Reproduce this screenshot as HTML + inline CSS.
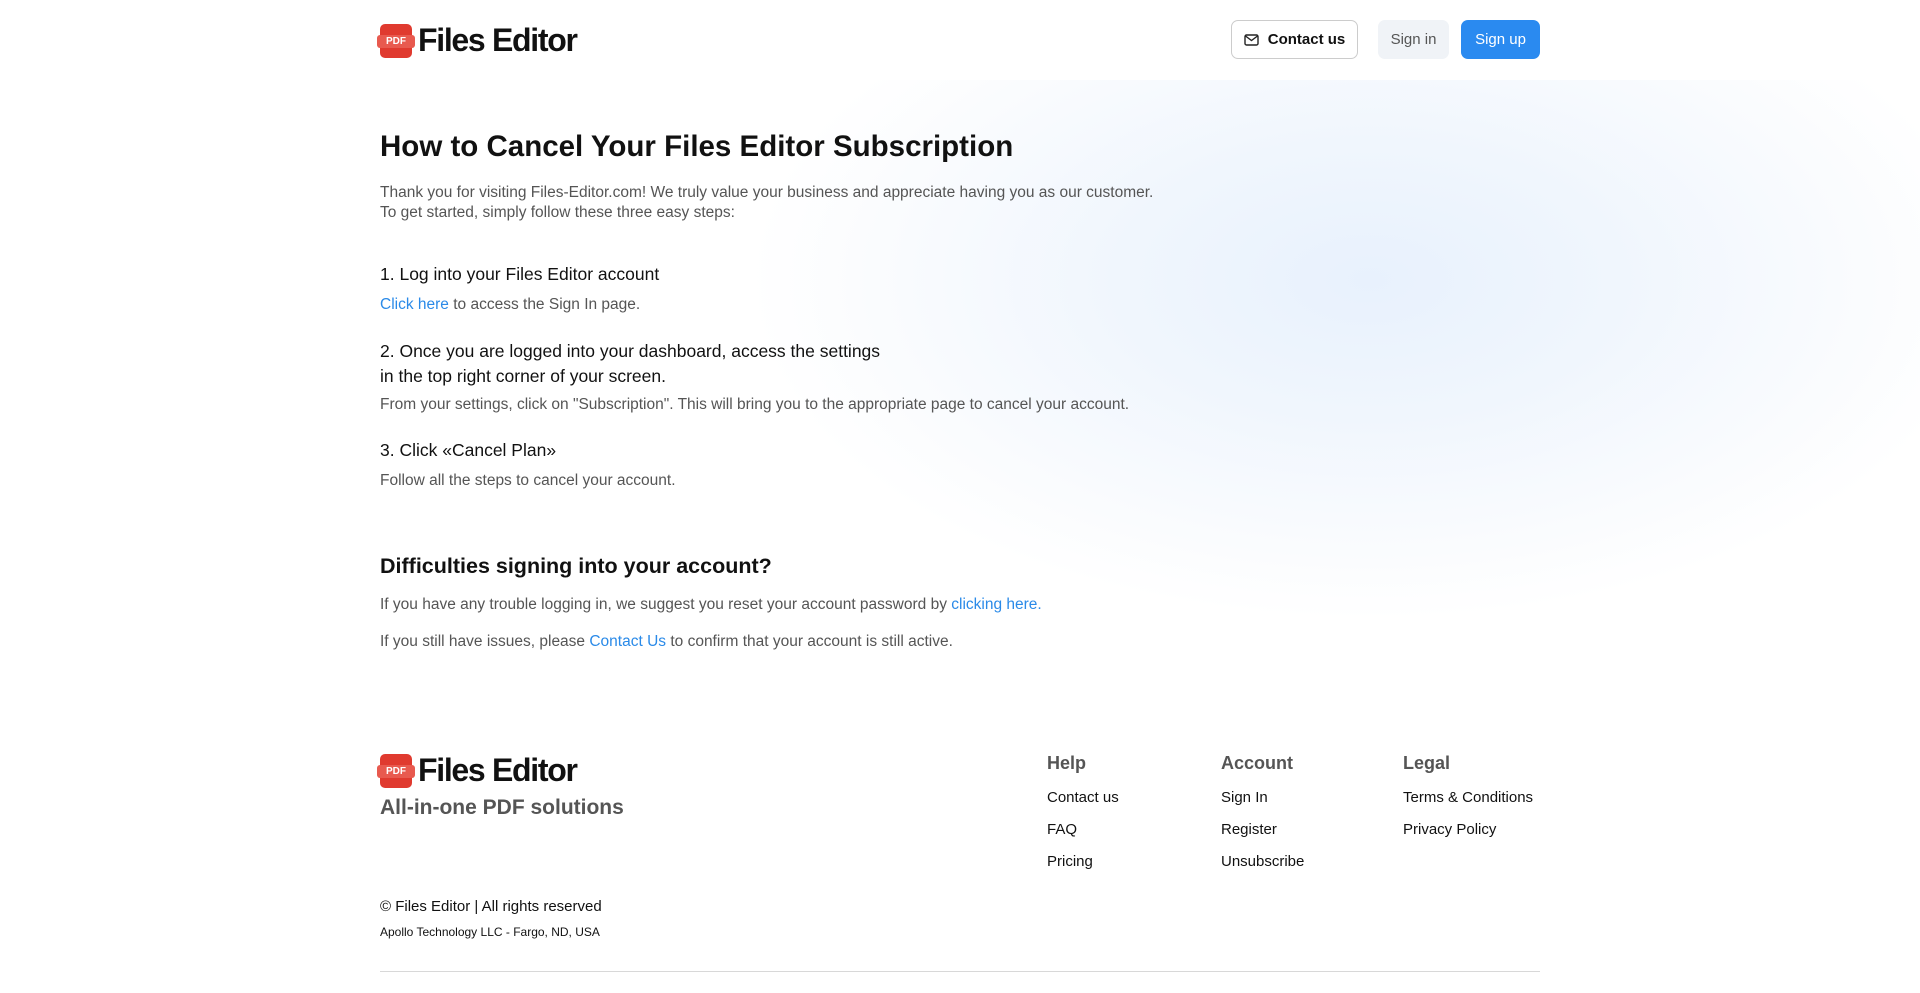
<!DOCTYPE html>
<html><head><meta charset="utf-8"><style>
*{margin:0;padding:0;box-sizing:border-box}
body{width:1920px;height:993px;overflow:hidden;background:#fff;font-family:"Liberation Sans",sans-serif;position:relative;color:#111}
.bg{position:absolute;left:650px;top:80px;width:1270px;height:600px;background:radial-gradient(ellipse 620px 340px at 720px 200px,#e8f1fd 0%,#f0f6fd 40%,#f9fbfe 75%,rgba(255,255,255,0) 100%)}
.a{position:absolute;white-space:nowrap}
.logo{display:flex;align-items:center;gap:6px}
.ic{width:32px;height:34px;background:#e03a2f;border-radius:5px;position:relative}
.ic span{position:absolute;left:-3px;top:11px;width:38px;height:13px;background:#e85a4f;border-radius:3px;color:#fff;font-size:10px;font-weight:bold;text-align:center;line-height:13px}
.lt{font-size:32px;font-weight:bold;letter-spacing:-1.3px;color:#111}
.btn{position:absolute;top:20px;height:39px;border-radius:7px;font-size:15px;display:flex;align-items:center;justify-content:center}
.t{color:#555;font-size:15.5px}
.l{color:#2a8ae8}
.h{font-size:17.5px;color:#111}
.fh{font-size:18px;font-weight:bold;color:#555}
.fl{font-size:15px;color:#111}
</style></head><body>
<div class="bg"></div>
<div class="a logo" style="left:380px;top:22px"><div class="ic"><span>PDF</span></div><div class="lt">Files Editor</div></div>
<div class="btn" style="left:1231px;width:127px;border:1px solid #ccc;color:#111;font-weight:bold"><svg width="15" height="12" viewBox="0 0 15 12" style="margin-right:9px"><rect x="1" y="1" width="13" height="10" rx="1.5" fill="none" stroke="#222" stroke-width="1.4"/><path d="M1.5 2 L7.5 6.5 L13.5 2" fill="none" stroke="#222" stroke-width="1.4"/></svg>Contact us</div>
<div class="btn" style="left:1378px;width:71px;background:#f0f3f7;color:#555">Sign in</div>
<div class="btn" style="left:1461px;width:79px;background:#2a8af0;color:#fff">Sign up</div>

<div class="a" style="left:380px;top:130px;font-size:29.5px;font-weight:bold;color:#111">How to Cancel Your Files Editor Subscription</div>
<div class="a t" style="left:380px;top:183px;line-height:20px">Thank you for visiting Files-Editor.com! We truly value your business and appreciate having you as our customer.<br>To get started, simply follow these three easy steps:</div>
<div class="a h" style="left:380px;top:264px">1. Log into your Files Editor account</div>
<div class="a t" style="left:380px;top:296px"><span class="l">Click here</span> to access the Sign In page.</div>
<div class="a h" style="left:380px;top:339px;line-height:25px">2. Once you are logged into your dashboard, access the settings<br>in the top right corner of your screen.</div>
<div class="a t" style="left:380px;top:396px">From your settings, click on "Subscription". This will bring you to the appropriate page to cancel your account.</div>
<div class="a h" style="left:380px;top:440px">3. Click «Cancel Plan»</div>
<div class="a t" style="left:380px;top:472px">Follow all the steps to cancel your account.</div>
<div class="a" style="left:380px;top:554px;font-size:21.5px;font-weight:bold;color:#111">Difficulties signing into your account?</div>
<div class="a t" style="left:380px;top:596px">If you have any trouble logging in, we suggest you reset your account password by <span class="l">clicking here.</span></div>
<div class="a t" style="left:380px;top:633px">If you still have issues, please <span class="l">Contact Us</span> to confirm that your account is still active.</div>

<div class="a logo" style="left:380px;top:752px"><div class="ic"><span>PDF</span></div><div class="lt">Files Editor</div></div>
<div class="a" style="left:380px;top:796px;font-size:21px;font-weight:bold;color:#555">All-in-one PDF solutions</div>

<div class="a fh" style="left:1047px;top:753px">Help</div>
<div class="a fl" style="left:1047px;top:789px">Contact us</div>
<div class="a fl" style="left:1047px;top:821px">FAQ</div>
<div class="a fl" style="left:1047px;top:853px">Pricing</div>
<div class="a fh" style="left:1221px;top:753px">Account</div>
<div class="a fl" style="left:1221px;top:789px">Sign In</div>
<div class="a fl" style="left:1221px;top:821px">Register</div>
<div class="a fl" style="left:1221px;top:853px">Unsubscribe</div>
<div class="a fh" style="left:1403px;top:753px">Legal</div>
<div class="a fl" style="left:1403px;top:789px">Terms &amp; Conditions</div>
<div class="a fl" style="left:1403px;top:821px">Privacy Policy</div>

<div class="a" style="left:380px;top:898px;font-size:15px;color:#111">© Files Editor | All rights reserved</div>
<div class="a" style="left:380px;top:925px;font-size:12px;color:#111">Apollo Technology LLC - Fargo, ND, USA</div>
<div class="a" style="left:380px;top:971px;width:1160px;height:1px;background:#d8d8d8"></div>
</body></html>
